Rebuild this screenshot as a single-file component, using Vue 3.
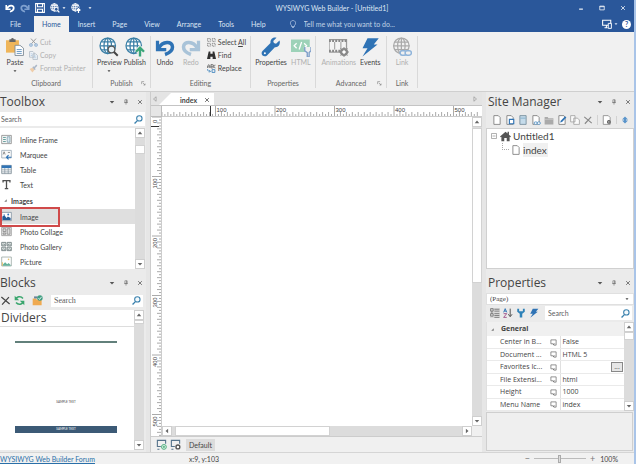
<script setup>
import { computed, h, onBeforeUnmount, onMounted, ref } from 'vue'

const glyphs = {
  undo: '<path d="M2 3v7h7" fill="none" stroke="currentColor" stroke-width="2.6"/><path d="M3 9C6 3 14 3 14 8c0 3-3 5-6 6" fill="none" stroke="currentColor" stroke-width="2.8"/>',
  redo: '<path d="M14 3v7H7" fill="none" stroke="currentColor" stroke-width="2.6"/><path d="M13 9C10 3 2 3 2 8c0 3 3 5 6 6" fill="none" stroke="currentColor" stroke-width="2.8"/>',
  save: '<path d="M1 1h14v14H1zM4 1v5h8V1M4 15v-5h8v5" fill="none" stroke="currentColor" stroke-width="1.7"/>',
  preview: '<circle cx="7" cy="7" r="6.2" fill="#fff"/><g fill="none" stroke="#3a7fa6" stroke-width="1"><circle cx="7" cy="7" r="6.2"/><ellipse cx="7" cy="7" rx="3" ry="6.2"/><path d="M7 1v12M1 7h12M2 3.8h10M2 10.2h10"/></g><circle cx="10" cy="10" r="2.7" fill="#e6f0f4" stroke="#555" stroke-width="1"/><path d="M12 12l3 3" stroke="#444" stroke-width="1.6"/>',
  publish: '<circle cx="7" cy="7" r="6.2" fill="#fff"/><g fill="none" stroke="#3a7fa6" stroke-width="1"><circle cx="7" cy="7" r="6.2"/><ellipse cx="7" cy="7" rx="3" ry="6.2"/><path d="M7 1v12M1 7h12M2 3.8h10M2 10.2h10"/></g><path d="M12 15.5v-6M8.8 11.8L12 8.6l3.2 3.2" fill="none" stroke="#f0f0f0" stroke-width="3.4"/><path d="M12 15.5v-6M8.8 11.8L12 8.6l3.2 3.2" fill="none" stroke="#3aa67a" stroke-width="1.9"/>',
  previewTop: '<g fill="none" stroke="currentColor" stroke-width="1.3"><circle cx="7" cy="7" r="6"/><ellipse cx="7" cy="7" rx="3" ry="6"/><path d="M1 7h12M2 4h10M2 10h10M7 1v12"/></g><circle cx="10" cy="10" r="3" fill="#2a579a" stroke="currentColor" stroke-width="1.4"/><path d="M12 12l3 3" stroke="currentColor" stroke-width="2"/>',
  publishTop: '<g fill="none" stroke="currentColor" stroke-width="1.3"><circle cx="7" cy="7" r="6"/><ellipse cx="7" cy="7" rx="3" ry="6"/><path d="M1 7h12M2 4h10M2 10h10M7 1v12"/></g><path d="M12 16V9M9 12l3-3 3 3" fill="none" stroke="#2a579a" stroke-width="4"/><path d="M12 16V9M9 12l3-3 3 3" fill="none" stroke="currentColor" stroke-width="2"/>',
  paste: '<path d="M0 2h11.500v11H0z" fill="#efb559"/><path d="M3 2.500V1h1.500a1.300 1.300 0 0 1 2.500 0h1.500v2.500H3z" fill="#666"/><path d="M8 6.500h4.500L15.500 9v6.500H8z" fill="#fff" stroke="#7d8a94" stroke-width=".8"/><path d="M9.500 10.300h4.500M9.500 12h4.500M9.500 13.700h4.500" stroke="#4b83b5" stroke-width=".7"/>',
  cut: '<path d="M3.500 1l8 9M12.500 1l-8 9" stroke="#999" stroke-width="1.7"/><g fill="none" stroke="#84a9cf" stroke-width="1.8"><circle cx="3.500" cy="12.500" r="2.300"/><circle cx="12.500" cy="12.500" r="2.300"/></g>',
  copy: '<path d="M1 1h6l2 2v8H1zM7 5h5l3 3v7H7z" fill="#f3f6f9" stroke="#a9b5c1" stroke-width="1.3"/><path d="M3 5h3M3 8h3M9 9h4M9 12h4" stroke="#8fb4d8"/>',
  brush: '<path d="M1 9l6-3 3 4-4 5z" fill="#efcda9"/><path d="M7 5l4 5M9 7l5-5" stroke="#aab6c6" stroke-width="2.600"/>',
  select: '<g fill="none" stroke="#777" stroke-width="1.4"><path d="M1 1h5v5H1zM9.500 1h5v5h-5zM1 9.500h5v5H1zM9.500 9.500h5v5h-5z" stroke-dasharray="2 1"/></g>',
  find: '<path d="M3 1h3v4h4V1h3l3 13h-6v-4H6v4H0z" fill="#303030"/>',
  replace: '<path d="M1 7V4l2-3 2 3v3M1 5h4M7 1v6h3c2 0 2-3 0-3H7M10 4c2 0 2-3 0-3H7M15 2c-3-1-4 5 0 5" fill="none" stroke="#555" stroke-width="1.3"/><path d="M1 9c0 4 2 4 5 4M4 11l2 2-2 2M9 10v5h5v-5z" fill="none" stroke="#3d82bd" stroke-width="1.5"/>',
  wrench: '<path d="M14.800 2.700l-2.800 2.600-1.700-.5-.5-1.700L12.400.5C9.800-.3 7.200 1.700 7.600 4.700L1.200 11.200c-2.200 2.600 1.200 5.600 3.600 3.500l6.300-6.600c3 .5 4.700-2.500 3.700-5.400z" fill="#2f73b5"/><circle cx="3.100" cy="13" r=".8" fill="#fff"/>',
  html: '<path d="M0 2h15v10H0z" fill="#9dd2b8"/><path d="M4.500 5L2.500 7l2 2M10.500 5l2 2-2 2M8.500 4l-2 6" fill="none" stroke="#fff"/><path d="M11 8v3l2 1.500V16h1.500v-3.500L16 11V8" fill="#f0f0f0" stroke="#7f9fca" stroke-width="1.100"/>',
  film: '<path d="M0 2h14v10H0z" fill="#f4f4f4" stroke="#999" stroke-width="1"/><path d="M0 3h14M0 11h14" stroke="#888" stroke-width="1.800" stroke-dasharray="1.500 1"/><path d="M4.500 4v6M9.500 4v6" stroke="#aaa"/><circle cx="12" cy="12" r="2.500" fill="#eee" stroke="#888" stroke-width="1.500"/><path d="M12 8v8M8 12h8M9.200 9.200l5.600 5.600M14.800 9.200l-5.600 5.600" stroke="#888" stroke-width=".8"/><circle cx="12" cy="12" r="1.200" fill="#fff"/>',
  bolt: '<path d="M6 1h9l-4 5h3L2 15.500 6 9H2z" fill="#2f73b5"/>',
  link: '<g fill="none" stroke="#aaa" stroke-width="1"><circle cx="7.500" cy="7" r="6.200"/><ellipse cx="7.500" cy="7" rx="3" ry="6.200"/><path d="M7.500 1v12M1 7h13M2 4h11M2 10h11"/></g><g fill="#f0f0f0" stroke="#8fb4da" stroke-width="1.200"><rect x="6.500" y="11" width="5" height="3.500" rx="1.700"/><rect x="10.500" y="11" width="5" height="3.500" rx="1.700"/></g>',
  launch: '<path d="M2 10V2h8M6 6l7 7M13 8v5H8" fill="none" stroke="#777" stroke-width="1.800"/>',
  bulb: '<path d="M5 11C1 7 3 1 8 1s7 6 3 10v2H5zM6 15h4" fill="none" stroke="#b4c8e6" stroke-width="1.500"/>',
  screen: '<path d="M1 2h13v8H1zM4 14h5M7 10v4" fill="none" stroke="#fff" stroke-width="1.700"/><path d="M10 7h5v8h-5z" fill="#2a579a" stroke="#fff" stroke-width="1.500"/>',
  min: '<path d="M3 11h10" stroke="#fff" stroke-width="3"/>',
  max: '<path d="M2 3h12v10H2zM2 4.500h12" fill="none" stroke="#fff" stroke-width="2"/>',
  x: '<path d="M3 3l10 10M13 3L3 13" stroke="currentColor" stroke-width="2"/>',
  xThin: '<path d="M2 3l12 10M13 3L3 14" stroke="currentColor" stroke-width="1.800"/>',
  down: '<path d="M2 5h12l-6 7z" fill="currentColor"/>',
  up: '<path d="M2 11h12L8 4z" fill="currentColor"/>',
  left: '<path d="M11 2v12L4 8z" fill="currentColor"/>',
  right: '<path d="M5 2v12l7-6z" fill="currentColor"/>',
  leftO: '<path d="M11 2v12L4 8z" fill="none" stroke="#888" stroke-width="1.500"/>',
  rightO: '<path d="M5 2v12l7-6z" fill="none" stroke="#888" stroke-width="1.500"/>',
  pin: '<path d="M5 2h6v7H5zM3 9.500h10M8 10v5M9.500 2v7" fill="none" stroke="#666" stroke-width="1.500"/>',
  search: '<circle cx="9.500" cy="6" r="4.800" fill="#f3f9fd" stroke="#3a81ad" stroke-width="1.900"/><path d="M6 10l-5 5" stroke="#3a81ad" stroke-width="2.400"/>',
  frame: '<path d="M1 2h14v12H1z" fill="#f8f8f8" stroke="#777"/><path d="M3 5h4M3 8h4M3 11h4" stroke="#5f9b98" stroke-width="1.400"/><path d="M9 4h4v8H9z" fill="#d9e7ee" stroke="#6f95a5"/>',
  marquee: '<path d="M1 2h14v11H1z" fill="#f8f8f8" stroke="#8b9cac"/><path d="M3 8l1.500-4L6 8M10 5h3" fill="none" stroke="#666"/><path d="M15 12H8M11 9l-3 3 3 3" fill="none" stroke="#2f73b5" stroke-width="1.700"/>',
  table: '<path d="M1 2h14v12H1z" fill="#fff" stroke="#6c7c87"/><path d="M1 2h14v4H1z" fill="#2f73b5"/><path d="M1 8.500h14M1 11.500h14M5.500 6v8M10.500 6v8" stroke="#7c8d99"/>',
  text: '<path d="M3 5V2.500h10V5M8 2v12M5.500 14h5" fill="none" stroke="#505050" stroke-width="1.900"/>',
  image: '<path d="M1 2h14v12H1z" fill="#fff" stroke="#6d8193"/><path d="M2 13V8l3-2 3 4 2-2 4 2v3z" fill="#245c96"/><circle cx="10.500" cy="5" r="1.400" fill="#2f73b5"/><path d="M4 6h1" stroke="#2f73b5" stroke-width="3"/>',
  collage: '<path d="M1 2h14v12H1z" fill="#eee" stroke="#888"/><path d="M3 4h4v4H3zM9 4h4v8H9zM3 10h4v2H3z" fill="#ddd" stroke="#777"/>',
  gallery: '<g fill="#e6ebea" stroke="#687778" stroke-width="1.200"><path d="M1 2h6v5H1zM9 2h6v5H9zM1 9h6v5H1zM9 9h6v5H9z"/></g><path d="M2 6l2-2 2 2M10 6l2-2 2 2M2 13l2-2 2 2M10 13l2-2 2 2" fill="none" stroke="#687778"/>',
  picture: '<path d="M1 1.500h14v13H1z" fill="#fff" stroke="#8b9a95"/><path d="M2 13l4-4 3 3 2-2 3 3v1H2z" fill="#63b19a"/><path d="M2 9v5" stroke="#e6c16f" stroke-width="1.500"/><circle cx="11" cy="5" r="1.200" fill="#e6c16f"/>',
  refresh: '<path d="M3 7c0-5 7-6 10-2M13 9c0 5-7 6-10 2" fill="none" stroke="#3aa66e" stroke-width="2.200"/><path d="M1 1v6.500h6.500zM15 15V8.500H8.500z" fill="#3aa66e"/>',
  folderAdd: '<path d="M1 5h5l1 2h7v8H1z" fill="#efaa51"/><path d="M3 2h5v3H3z" fill="#68829a"/><circle cx="11.500" cy="4.500" r="4" fill="#3e9d80"/><path d="M9.500 4.500l1.500 2 3-4" fill="none" stroke="#fff" stroke-width="1.200"/>',
  page: '<path d="M3 1h7l3 3v11H3z" fill="#fff" stroke="#777" stroke-width="1.300"/>',
  pageGlobe: '<path d="M3 1h7l3 3v11H3z" fill="#fff" stroke="#777" stroke-width="1.300"/><path d="M7 7h7v7H7z" fill="#fff" stroke="#2f73b5" stroke-width="1.800"/>',
  pageBlue: '<path d="M3 1h10v14H3z" fill="#c5dbea" stroke="#6f8798" stroke-width="1.300"/><path d="M4 5h8" stroke="#6499b8"/>',
  pageLink: '<path d="M3 1h7l3 3v11H3z" fill="#fff" stroke="#777" stroke-width="1.300"/><rect x="5" y="11" width="5" height="4" rx="2" fill="#fff" stroke="#5390c2" stroke-width="1.400"/><rect x="10" y="11" width="5" height="4" rx="2" fill="#fff" stroke="#5390c2" stroke-width="1.400"/>',
  folder: '<path d="M1 3h5l1 2h8v10H1z" fill="#aaa"/><path d="M1 7h14" stroke="#d0d0d0"/>',
  edit: '<path d="M3 1h8l2 3v11H3z" fill="#fff" stroke="#777" stroke-width="1.300"/><path d="M5 12l1-3 7-7 2 2-7 7z" fill="#2f73b5"/>',
  pages: '<path d="M1 1h7v10H1zM6 5h6l3 3v7H6z" fill="#fafafa" stroke="#9b9b9b" stroke-width="1.200"/>',
  pageGear: '<path d="M2 1h8l3 3v11H2z" fill="#fff" stroke="#888" stroke-width="1.300"/><circle cx="11" cy="11" r="3" fill="#555"/><circle cx="11" cy="11" r="1" fill="#fff"/>',
  arrows: '<path d="M8 1l6 6h-4v2h4l-6 6-6-6h4V7H2z" fill="#5994cb"/>',
  home: '<path d="M0 8L8 1l3 2.500V1h2v4.500L16 8l-1 1-1-.8V15H9.800v-5H6.200v5H2V8.200L1 9z" fill="#555"/>',
  expand: '<path d="M3 3h10v10H3zM5 8h6" fill="#fff" stroke="#888" stroke-width="1.300"/>',
  tri: '<path d="M12 4v8H4z" fill="#777"/>',
  cats: '<path d="M1 1h4v4H1zM1 9h4v4H1zM7 2h8M7 5h8M7 9h8M7 12h8M7 15h8M3 5v4" fill="none" stroke="#777" stroke-width="1.400"/>',
  sort: '<path d="M1 7l2.500-6L6 7M2 5h3" fill="none" stroke="#2f73b5" stroke-width="1.500"/><path d="M1 9h5l-5 6h5" fill="none" stroke="#9b4b86" stroke-width="1.400"/><path d="M11.500 1v12M8.500 10l3 4 3-4" fill="none" stroke="#555" stroke-width="1.600"/>',
  wrenchUp: '<path d="M2 1v5l4 3v6h4V9l4-3V1h-3v4H5V1z" fill="#2f82b8"/>',
  note: '<path d="M2 2h12v12H9l-2-3H2z" fill="#fff" stroke="#666" stroke-width="1.600"/><path d="M8 14v-3h4" fill="none" stroke="#666" stroke-width="1.300"/>',
  viewAdd: '<path d="M14 7V2H2v9h5M5 15H2" fill="none" stroke="#56748c" stroke-width="1.600"/><circle cx="11.500" cy="11.500" r="3.500" fill="#fff" stroke="#3aa66e" stroke-width="1.300"/><path d="M9.500 11.500h4M11.500 9.500v4" stroke="#3aa66e" stroke-width="1.300"/>',
  viewGear: '<path d="M14 7V2H2v9h5M5 15H2" fill="none" stroke="#56748c" stroke-width="1.600"/><circle cx="11.500" cy="11.500" r="2.800" fill="#fff" stroke="#555" stroke-width="2"/>',
}
const Icon = (p) => h('svg', { viewBox: '0 0 16 16', 'aria-hidden': 'true', innerHTML: glyphs[p.name] })
Icon.props = ['name']

const menus = ['File', 'Home', 'Insert', 'Page', 'View', 'Arrange', 'Tools', 'Help']
const activeMenu = ref('Home')
const tools = [
  ['frame', 'Inline Frame'], ['marquee', 'Marquee'], ['table', 'Table'], ['text', 'Text'],
]
const imageTools = [
  ['image', 'Image'], ['collage', 'Photo Collage'], ['gallery', 'Photo Gallery'], ['picture', 'Picture'],
]
const activeTool = ref('Image')
const siteTools = [
  ['page', 'New page'], ['pageGlobe', 'New site page'], ['pageBlue', 'New master page'], ['pageLink', 'New link'],
  ['folder', 'New folder'], ['edit', 'Edit page'], ['pages', 'Clone page'], ['xThin', 'Delete page'],
]
const properties = [
  ['Center in B...', 'False'], ['Document ...', 'HTML 5'], ['Favorites Ic...', ''],
  ['File Extensi...', 'html'], ['Height', '1000'], ['Menu Name', 'index'],
]
const zoom = ref(50)

// Rulers: one tick every 10 page units, labelled every 100.
const step = 5.95
const board = ref(null)
const size = ref({ w: 0, h: 0 })
const measure = () => { size.value = { w: board.value.clientWidth - 11, h: board.value.clientHeight - 11 } }
onMounted(() => { measure(); window.addEventListener('resize', measure) })
onBeforeUnmount(() => window.removeEventListener('resize', measure))
const ticks = (from, length, offset) => {
  const out = []
  for (let i = from; i * step + offset < length; i++) {
    const at = i * step + offset
    out.push({ at, major: i % 10 === 0, labelled: i % 10 === 0 && at + 14 < length, label: i * 10 })
  }
  return out
}
const hTicks = computed(() => ticks(1, size.value.w, -6))
const vTicks = computed(() => ticks(0, size.value.h, 0))
</script>

<template>
  <div class="window">
    <header class="titlebar">
      <div class="quick">
        <button aria-label="Undo"><Icon name="undo" class="i10" /></button>
        <button aria-label="Redo" class="faded"><Icon name="redo" class="i10" /></button>
        <button aria-label="Save"><Icon name="save" class="i10" /></button>
        <button aria-label="Preview"><Icon name="previewTop" class="i10" /><Icon name="down" class="i4" /></button>
        <button aria-label="Publish"><Icon name="publishTop" class="i10" /></button>
        <button aria-label="Customize"><Icon name="down" class="i4" /></button>
      </div>
      <h1>WYSIWYG Web Builder - [Untitled1]</h1>
      <div class="winbtns">
        <button aria-label="Minimize"><Icon name="min" class="i6" /></button>
        <button aria-label="Maximize"><Icon name="max" class="i6" /></button>
        <button aria-label="Close"><Icon name="x" class="i6" /></button>
      </div>
    </header>

    <nav class="menubar">
      <button v-for="m in menus" :key="m" :class="{ active: m === activeMenu }" @click="activeMenu = m">{{ m }}</button>
      <Icon name="bulb" class="i8 bulb" />
      <input class="tell" type="text" aria-label="Tell me what you want to do" placeholder="Tell me what you want to do..." />
      <button class="side" aria-label="Display"><Icon name="screen" class="i10" /><Icon name="down" class="i4" /></button>
      <button class="help" aria-label="Help contents">?</button>
    </nav>

    <section class="ribbon">
      <div class="group clipboard">
        <div class="tools">
          <button class="big"><Icon name="paste" class="i18" />Paste<Icon name="down" class="i4" /></button>
          <div class="stack">
            <button disabled><Icon name="cut" class="i9" />Cut</button>
            <button disabled><Icon name="copy" class="i9" />Copy</button>
            <button disabled><Icon name="brush" class="i9" />Format Painter</button>
          </div>
        </div>
        <footer>Clipboard</footer>
      </div>
      <div class="group publish">
        <div class="tools">
          <button class="big"><Icon name="preview" class="i20" />Preview<Icon name="down" class="i4" /></button>
          <button class="big"><Icon name="publish" class="i20" />Publish</button>
        </div>
        <footer>Publish<Icon name="launch" class="i5 launcher" /></footer>
      </div>
      <div class="group editing">
        <div class="tools">
          <button class="big blue"><Icon name="undo" class="i20" /><span>Undo</span></button>
          <button class="big pale" disabled><Icon name="redo" class="i20" /><span>Redo</span></button>
          <div class="stack tight">
            <button><Icon name="select" class="i9" /><span>Select <u>A</u>ll</span></button>
            <button><Icon name="find" class="i9" />Find</button>
            <button><Icon name="replace" class="i9" />Replace</button>
          </div>
        </div>
        <footer>Editing</footer>
      </div>
      <div class="group props">
        <div class="tools">
          <button class="big"><Icon name="wrench" class="i20" />Properties</button>
          <button class="big" disabled><Icon name="html" class="i20" />HTML</button>
        </div>
        <footer>Properties</footer>
      </div>
      <div class="group advanced">
        <div class="tools">
          <button class="big" disabled><Icon name="film" class="i20" />Animations</button>
          <button class="big"><Icon name="bolt" class="i20" />Events</button>
        </div>
        <footer>Advanced<Icon name="launch" class="i5 launcher" /></footer>
      </div>
      <div class="group links">
        <div class="tools">
          <button class="big" disabled><Icon name="link" class="i20" />Link</button>
        </div>
        <footer>Link</footer>
      </div>
    </section>

    <main class="workspace">
      <aside class="dock">
        <section class="panel">
          <header class="phead"><h2>Toolbox</h2><Icon name="down" class="i6" /><Icon name="pin" class="i6" /><Icon name="x" class="i6" /></header>
          <label class="search"><input type="text" placeholder="Search" aria-label="Search toolbox" /><Icon name="search" class="i9" /></label>
          <div class="scroller toolbox">
            <div class="list">
              <button v-for="[icon, name] in tools" :key="name" class="item"><Icon :name="icon" class="i11" />{{ name }}</button>
              <h3><Icon name="tri" class="i5" />Images</h3>
              <button v-for="[icon, name] in imageTools" :key="name" class="item" :class="{ chosen: name === activeTool }" @click="activeTool = name"><Icon :name="icon" class="i11" />{{ name }}</button>
            </div>
            <div class="bar"><button aria-label="Scroll up"><Icon name="up" class="i6" /></button><i class="thumb"></i><button aria-label="Scroll down"><Icon name="down" class="i6" /></button></div>
          </div>
        </section>
        <section class="panel">
          <header class="phead"><h2>Blocks</h2><Icon name="down" class="i6" /><Icon name="pin" class="i6" /><Icon name="x" class="i6" /></header>
          <div class="blocktools">
            <button aria-label="Delete block"><Icon name="xThin" class="i11" /></button>
            <button aria-label="Refresh"><Icon name="refresh" class="i11" /></button>
            <button aria-label="Add folder" class="add"><Icon name="folderAdd" class="i11" /></button>
            <label class="search boxed bitmap"><input type="text" placeholder="Search" aria-label="Search blocks" /><Icon name="search" class="i9" /></label>
          </div>
          <div class="scroller blocks">
            <div class="list">
              <h3 class="section">Dividers</h3>
              <div class="samples">
                <hr />
                <p>SAMPLE TEXT</p>
                <p class="filled">SAMPLE TEXT</p>
              </div>
            </div>
            <div class="bar"><button aria-label="Scroll up"><Icon name="up" class="i6" /></button><i class="thumb"></i><button aria-label="Scroll down"><Icon name="down" class="i6" /></button></div>
          </div>
        </section>
      </aside>

      <section class="editor">
        <div class="tabs">
          <button aria-label="Previous tab" class="arrow"><Icon name="leftO" class="i6" /></button>
          <div class="tab"><b>index</b><button aria-label="Close index"><Icon name="x" class="i6" /></button></div>
          <button aria-label="Next tab" class="arrow next"><Icon name="rightO" class="i6" /></button>
        </div>
        <div ref="board" class="board">
          <div class="corner"></div>
          <svg class="hruler" aria-hidden="true">
            <g v-for="t in hTicks" :key="t.label">
              <line :x1="t.at" :x2="t.at" :y1="t.major ? 0 : 6" y2="10" />
              <line :x1="t.at - 3" :x2="t.at - 3" y1="8" y2="10" />
              <text v-if="t.labelled" :x="t.at + 1" y="6">{{ t.label }}</text>
            </g>
            <line class="cursor" x1="48.5" x2="48.5" y1="0" y2="10" />
          </svg>
          <svg class="vruler" aria-hidden="true">
            <g v-for="t in vTicks" :key="t.label">
              <line :y1="t.at" :y2="t.at" :x1="t.major ? 1 : 6" x2="10" />
              <line :y1="t.at + 3" :y2="t.at + 3" x1="8" x2="10" />
              <text v-if="t.labelled" :transform="`translate(6 ${t.at + (t.label ? 12 : 6)}) rotate(-90)`">{{ t.label }}</text>
            </g>
            <line class="cursor" x1="0" x2="8" y1="9.5" y2="9.5" />
          </svg>
          <div class="canvas"></div>
          <div class="bar"><button aria-label="Scroll up"><Icon name="up" class="i6" /></button><i class="thumb"></i><button aria-label="Scroll down"><Icon name="down" class="i6" /></button></div>
          <div class="bar flat"><button aria-label="Scroll left"><Icon name="left" class="i6" /></button><i class="thumb"></i><button aria-label="Scroll right"><Icon name="right" class="i6" /></button></div>
        </div>
        <div class="views">
          <button aria-label="Add breakpoint"><Icon name="viewAdd" class="i11" /></button>
          <button aria-label="Manage breakpoints"><Icon name="viewGear" class="i11" /></button>
          <button class="default">Default</button>
        </div>
      </section>

      <aside class="dock right">
        <section class="panel">
          <header class="phead"><h2>Site Manager</h2><Icon name="down" class="i6" /><Icon name="pin" class="i6" /><Icon name="x" class="i6" /></header>
          <div class="sitetools">
            <button v-for="[icon, name] in siteTools" :key="name" :aria-label="name"><Icon :name="icon" class="i10" /></button>
            <button class="sep" aria-label="Page properties"><Icon name="pageGear" class="i10" /></button>
            <button class="sep" aria-label="Move"><Icon name="arrows" class="i8" /></button>
          </div>
          <ul class="tree">
            <li><Icon name="expand" class="i8" /><Icon name="home" class="i11" />Untitled1
              <ul><li><i class="branch"></i><Icon name="page" class="i10" /><span>index</span></li></ul>
            </li>
          </ul>
        </section>
        <section class="panel">
          <header class="phead"><h2>Properties</h2><Icon name="down" class="i6" /><Icon name="pin" class="i6" /><Icon name="x" class="i6" /></header>
          <div class="combo"><select aria-label="Object"><option>(Page)</option></select><Icon name="down" class="i4" /></div>
          <div class="proptools">
            <button aria-label="Categorized" class="on"><Icon name="cats" class="i10" /></button>
            <button aria-label="Alphabetical"><Icon name="sort" class="i10" /></button>
            <button aria-label="Properties"><Icon name="wrenchUp" class="i10" /></button>
            <button aria-label="Events"><Icon name="bolt" class="i10" /></button>
            <label class="search boxed"><input type="text" placeholder="Search" aria-label="Search properties" /><Icon name="search" class="i9" /></label>
          </div>
          <div class="scroller grid">
            <div class="list">
              <h3 class="category"><Icon name="tri" class="i5" />General</h3>
              <table>
                <tbody>
                  <tr v-for="[name, value] in properties" :key="name">
                    <th scope="row">{{ name }}</th>
                    <td class="note"><Icon name="note" class="i7" /></td>
                    <td><div class="value">{{ value }}<button v-if="!value" aria-label="Browse">...</button></div></td>
                  </tr>
                </tbody>
              </table>
            </div>
            <div class="bar"><button aria-label="Scroll up"><Icon name="up" class="i6" /></button><i class="thumb"></i><button aria-label="Scroll down"><Icon name="down" class="i6" /></button></div>
          </div>
          <div class="describe"></div>
        </section>
      </aside>
    </main>

    <footer class="status">
      <a href="#forum">WYSIWYG Web Builder Forum</a>
      <span class="coords">x:9, y:103</span>
      <label class="zoom"><span>−</span><input v-model="zoom" type="range" min="0" max="100" aria-label="Zoom" /><span>+</span></label>
      <span class="pct">100%</span>
    </footer>
  </div>
</template>

<style>
body { margin: 0; }
</style>

<style scoped>
* { box-sizing: border-box; }
.window { height: 100vh; display: flex; flex-direction: column; background: #e6e6e6; color: #444; font: 7px/10px Lato, "Open Sans", sans-serif; border-right: 2px solid #a9c4e8; }
button { display: flex; align-items: center; justify-content: center; border: 0; padding: 0; margin: 0; background: none; color: inherit; font: inherit; }
input, select { border: 0; padding: 0; margin: 0; background: none; color: inherit; font: inherit; outline: 0; min-width: 0; }
h1, h2, h3, p, ul { margin: 0; padding: 0; font: inherit; list-style: none; }
svg { flex: none; display: block; }
.i4 { width: 4px; height: 4px; }
.i5 { width: 5px; height: 5px; }
.i6 { width: 6px; height: 6px; }
.i7 { width: 7px; height: 7px; }
.i8 { width: 8px; height: 8px; }
.i9 { width: 9px; height: 9px; }
.i10 { width: 10px; height: 10px; }
.i11 { width: 11px; height: 11px; }
.i18 { width: 18px; height: 18px; }
.i20 { width: 20px; height: 20px; }

.titlebar { flex: none; display: grid; grid-template-columns: 1fr auto 1fr; align-items: center; height: 16px; background: #2a579a; color: #fff; }
.titlebar h1 { color: #dde6f3; padding-left: 30px; }
.quick { display: flex; gap: 5px; padding-left: 5px; align-items: center; height: 12px; }
.quick .faded { color: #7ea0cf; }
.quick .i4 { margin-left: 2px; }
.winbtns { display: flex; justify-content: flex-end; gap: 15px; padding-right: 8px; }

.menubar { flex: none; display: flex; align-items: stretch; gap: 1px; height: 16px; padding-left: 2px; background: #2a579a; color: #dbe5f4; }
.menubar > button { padding: 0 8px; }
.menubar > button:first-child { padding-right: 12px; }
.menubar > button.active { background: #f1f1f1; color: #2a579a; }
.menubar .bulb { align-self: center; margin: 0 6px 0 14px; }
.menubar .tell { flex: 1; }
.menubar .tell::placeholder, .search input::placeholder { color: inherit; opacity: .85; }
.menubar .side { padding: 0 3px 0 0; gap: 2px; }
.menubar .help { align-self: center; width: 9px; height: 9px; margin-right: 3px; padding: 0; border-radius: 50%; background: #fff; color: #2a579a; font-weight: 700; }

.ribbon { flex: none; display: flex; height: 60px; padding-top: 4px; background: #f1f1f1; border-bottom: 1px solid #cfcfcf; }
.group { display: flex; flex-direction: column; justify-content: space-between; border-right: 1px solid #d9d9d9; margin-bottom: 3px; }
.group footer { position: relative; text-align: center; color: #666; }
.launcher { position: absolute; right: 4px; top: 3px; }
.tools { display: flex; justify-content: center; height: 42px; }
.big { flex-direction: column; justify-content: flex-start; padding-top: 1px; }
.big .i18 { margin: 1px; }
.big.blue svg { color: #2f73b5; }
.big.pale svg { color: #a9c3d8; }
.big .i4 { margin-top: 2px; }
button:disabled { color: #b0b0b0; }
.stack { display: flex; flex-direction: column; gap: 3px; padding-top: 1px; }
.stack button { justify-content: flex-start; gap: 2px; height: 10px; }
.clipboard { width: 93px; }
.clipboard .tools { justify-content: flex-start; padding-left: 5px; gap: 4px; }
.publish { width: 58px; }
.publish .tools { gap: 2px; }
.editing { width: 100px; }
.editing .tools { gap: 6px; }
.props { width: 65px; }
.props .tools, .advanced .tools { gap: 4px; }
.advanced { width: 71px; }
.links { width: 31px; }

.workspace { flex: 1; display: grid; grid-template-columns: 146px minmax(0, 1fr) 148px; grid-template-rows: minmax(0, 1fr); gap: 4px; min-height: 0; }
.dock { display: grid; grid-template-rows: minmax(0, 182fr) minmax(0, 179fr); min-height: 0; background: #efefef; }
.panel { display: flex; flex-direction: column; min-height: 0; background: #ebebeb; }
.phead { flex: none; display: flex; align-items: center; gap: 8px; height: 20px; padding-right: 3px; color: #555; }
.phead h2 { flex: 1; font: 12px/20px "Open Sans", sans-serif; color: #444; }
.right .phead { padding-left: 2px; }
.search { flex: none; display: flex; align-items: center; height: 14px; margin-right: 1px; padding: 0 2px 0 1px; background: #fff; }
.search input { flex: 1; width: 0; }
.search.boxed { flex: 1; height: 12px; padding-left: 3px; margin-right: 2px; }
.search.bitmap { font-family: "Liberation Serif", serif; font-size: 8px; margin-right: 3px; }

.scroller { flex: 1; display: flex; min-height: 0; margin-top: 2px; }
.scroller .list { flex: 1; min-width: 0; background: #fff; overflow: hidden; }
.bar { display: flex; flex-direction: column; justify-content: space-between; width: 10px; background: #dcdcdc; }
.bar button { flex: none; width: 10px; height: 10px; background: #fff; border: 1px solid #cfcfcf; color: #666; }
.bar .thumb { background: #fff; border: 1px solid #d2d2d2; }
.toolbox { margin-bottom: 4px; margin-right: 1px; }
.toolbox .list { padding-top: 4px; }
.toolbox .thumb { height: 9px; margin: 7px 0 auto; }
.item { width: 100%; height: 15px; justify-content: flex-start; gap: 8px; padding-left: 1px; }
.item.chosen { position: relative; background: #dfdfdf; }
.item.chosen::after { content: ""; box-sizing: border-box; position: absolute; left: 0; top: -2px; width: 60px; height: 20px; border: 2px solid #d04a4a; }
.list h3:not(.section) { display: flex; align-items: center; gap: 3px; height: 17px; padding-left: 3px; font-weight: 700; }

.blocktools { flex: none; display: flex; align-items: center; gap: 3px; height: 15px; }
.blocktools .add { margin: 0 5px 0 4px; }
.blocks { margin: 2px 2px 2px 0; }
.blocks .thumb { height: 4px; margin-bottom: auto; }
.section { font: 12px/16px "Open Sans", sans-serif; padding-left: 1px; border-bottom: 1px solid #ddd; }
.samples { display: flex; flex-direction: column; padding: 14px 17px 0 15px; text-align: center; font-size: 3px; line-height: 7px; }
.samples hr { width: 100%; height: 2px; margin: 0 0 56px; border: 0; background: #62807b; }
.samples p { margin-bottom: 20px; }
.samples .filled { margin-bottom: 0; background: #3c5a76; color: #fff; }

.editor { display: flex; flex-direction: column; min-width: 0; min-height: 0; border-left: 1px solid #ccc; background: #f0f0f0; }
.tabs { flex: none; display: flex; height: 14px; background: #e4e4e4; border-bottom: 1px solid #c4c4c4; }
.tabs .arrow { width: 8px; }
.tabs .next { margin: 0 3px 0 auto; }
.tab { display: flex; align-items: center; gap: 7px; padding: 1px 4px 0 21px; margin-top: 1px; background: #fff; clip-path: polygon(12px 0, 100% 0, 100% 100%, 0 100%); }
.board { flex: 1; display: grid; grid-template-columns: 11px minmax(0, 1fr) 10px; grid-template-rows: 11px minmax(0, 1fr) 10px; min-height: 0; }
.corner { background: #e6e6e6; border-right: 1px solid #bbb; border-bottom: 1px solid #bbb; }
.hruler { grid-column: 2 / 4; width: 100%; height: 11px; background: #fff; border-bottom: 1px solid #ccc; }
.vruler { grid-row: 2 / 4; width: 11px; height: 100%; min-height: 0; background: #fff; border-right: 1px solid #ccc; }
.hruler line, .vruler line { stroke: #aaa; stroke-width: 1; }
.hruler .cursor, .vruler .cursor { stroke: #333; }
.hruler text, .vruler text { font: 6px "Liberation Sans", sans-serif; fill: #444; }
.canvas { background: #fff; }
.board .bar .thumb { flex: 0 0 50%; margin: 1px 0 auto; }
.bar.flat { grid-column: 2; flex-direction: row; width: auto; }
.board .bar.flat .thumb { margin: 0 auto 0 3px; }
.views { flex: none; display: flex; align-items: center; gap: 3px; height: 16px; padding-left: 5px; border-top: 1px solid #ccc; }
.default { height: 12px; padding: 0 3px; margin-left: 2px; background: #dcdcdc; }

.sitetools { flex: none; display: flex; align-items: center; gap: 3px; height: 15px; padding-left: 6px; margin-bottom: 1px; color: #888; }
.sitetools .sep { padding-left: 4px; margin-left: 1px; border-left: 1px solid #d2d2d2; }
.tree { flex: 1; margin-bottom: 4px; padding: 0 3px; background: #fff; border: 1px solid #d0d0d0; font-size: 10px; line-height: 14px; }
.tree li { display: flex; flex-wrap: wrap; align-items: center; gap: 0 2px; }
.tree ul { width: 100%; padding-left: 12px; }
.branch { width: 7px; height: 7px; margin-top: -7px; border-left: 1px dotted #aaa; border-bottom: 1px dotted #aaa; }
.tree span { background: #f0f0f0; padding-right: 1px; }

.combo { flex: none; display: flex; align-items: center; height: 12px; padding: 0 4px 0 3px; background: #fff; border: 1px solid #e0e0e0; }
.combo select { flex: 1; appearance: none; font: 7px/10px "Liberation Serif", serif; }
.proptools { flex: none; display: flex; align-items: center; gap: 3px; height: 16px; padding-left: 4px; }
.proptools .on { background: #d9d9d9; }
.proptools .boxed { height: 14px; margin-left: 3px; }
.grid { flex: none; height: 89px; margin-top: 1px; font-family: "Open Sans", sans-serif; }
.list h3.category { height: 14px; background: #f0f0f0; gap: 6px; padding-left: 3px; }
.grid .thumb { height: 8px; margin-bottom: auto; }
.grid .list { border-left: 1px solid #e0e0e0; }
table { width: 100%; height: 75px; border-collapse: collapse; table-layout: fixed; }
th, td { padding: 0; font-weight: 400; text-align: left; white-space: nowrap; border-bottom: 1px solid #eaeaea; line-height: 10px; }
th { width: 63px; padding-left: 13px; }
.note { width: 10px; border-right: 1px solid #e0e0e0; }
.value { display: flex; justify-content: space-between; height: 10px; padding-left: 2px; }
.value button { width: 12px; height: 10px; margin: 0 1px 0 auto; border: 1px solid #888; background: #e6e6e6; line-height: 6px; }
.describe { flex: 1; margin: 1px 1px 1px 0; border: 1px solid #cfcfcf; background: #efefef; }

.status { flex: none; display: flex; align-items: center; height: 12px; background: #f1f1f1; border-top: 1px solid #d5d5d5; }
.status a { color: #2a6fa8; text-decoration: underline; width: 189px; }
.zoom { display: flex; align-items: center; gap: 4px; margin-left: auto; font-size: 9px; color: #777; }
.zoom input { appearance: none; width: 52px; height: 8px; background: linear-gradient(#bbb, #bbb) center / 100% 1px no-repeat; }
.zoom input::-webkit-slider-thumb { appearance: none; width: 3px; height: 8px; background: #ddd; border: 1px solid #aaa; }
.pct { margin: 0 16px 0 5px; }
</style>
